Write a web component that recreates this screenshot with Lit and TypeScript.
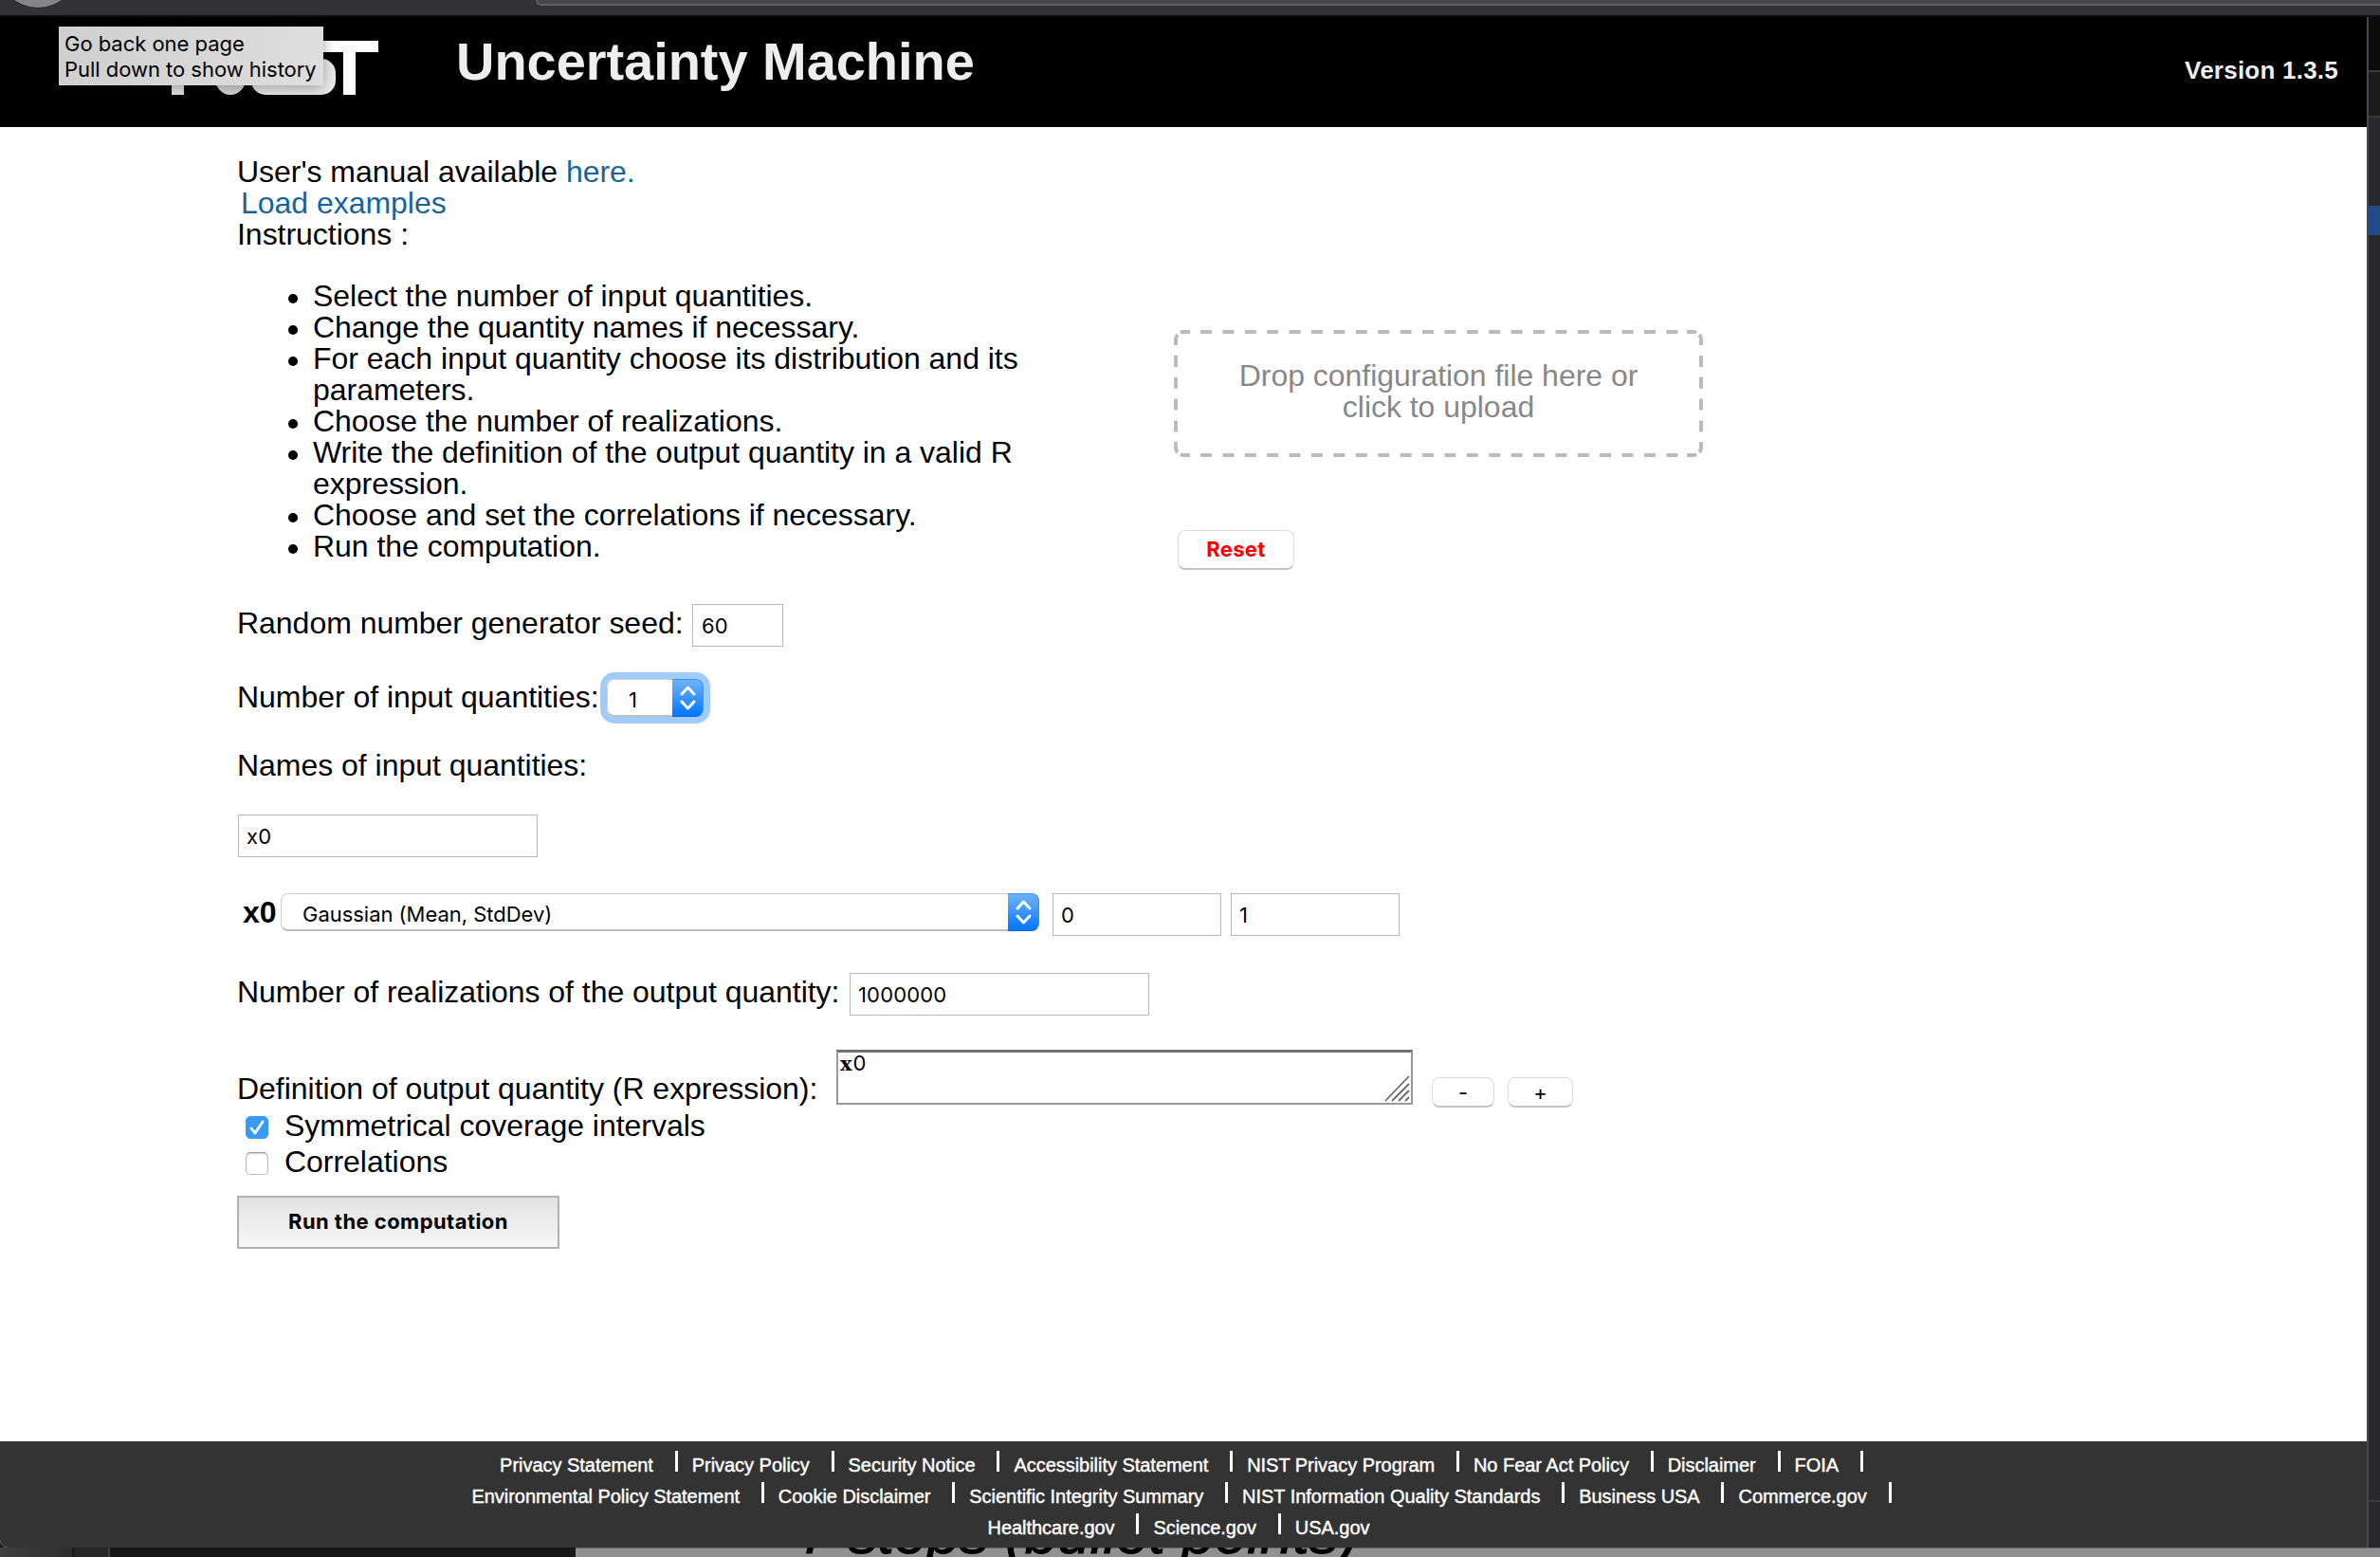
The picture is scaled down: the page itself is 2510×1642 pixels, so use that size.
import { LitElement, html, svg, css } from "lit";
import { customElement } from "lit/decorators.js";

const STEPS = [
  "Select the number of input quantities.",
  "Change the quantity names if necessary.",
  "For each input quantity choose its distribution and its parameters.",
  "Choose the number of realizations.",
  "Write the definition of the output quantity in a valid R expression.",
  "Choose and set the correlations if necessary.",
  "Run the computation.",
];

const FOOTER = [
  ["Privacy Statement", "Privacy Policy", "Security Notice", "Accessibility Statement", "NIST Privacy Program", "No Fear Act Policy", "Disclaimer", "FOIA"],
  ["Environmental Policy Statement", "Cookie Disclaimer", "Scientific Integrity Summary", "NIST Information Quality Standards", "Business USA", "Commerce.gov"],
  ["Healthcare.gov", "Science.gov", "USA.gov"],
];

const range = (n: number) => Array.from({ length: n }, (_, i) => i);

@customElement("mac-select")
class MacSelect extends LitElement {
  static properties = { value: { type: String } };
  declare value: string;
  static styles = css`
    :host { display: flex; box-sizing: border-box; height: 40px; border-radius: 8px; background: #fff;
      font: 22px/26px Inter, "Liberation Sans", sans-serif; color: #000; }
    .face { flex: 1; box-sizing: border-box; border: 1px solid #cfcfcf; border-bottom: 2px solid #bdbdbd;
      border-right: 0; border-radius: 8px 0 0 8px; padding: 8px 0 0 22px; white-space: nowrap; }
    .knob { width: 33px; height: 40px; box-sizing: border-box; border-radius: 0 8px 8px 0;
      border: solid #3d8ff0; border-width: 1px 1px 1px 0; border-bottom-color: #0a63e6;
      background: linear-gradient(#6db3fb, #3f98fd 45%, #0a7bff 90%); }
    svg { display: block; width: 32px; height: 38px; }
  `;
  render() {
    return html`<div class="face">${this.value}</div>
      <div class="knob"><svg viewBox="0 0 32 38" fill="none" stroke="#fff" stroke-width="3" stroke-linecap="round" stroke-linejoin="round">
        <polyline points="10,15 16.5,8 23,15"></polyline><polyline points="10,23 16.5,30 23,23"></polyline></svg></div>`;
  }
}

@customElement("app-root")
class AppRoot extends LitElement {
  static styles = css`
    :host { display: block; width: 2510px; height: 1642px; overflow: hidden; position: relative;
      font: 32px/33px "Liberation Sans", Arial, sans-serif; color: #000; background: #fff; }
    * { box-sizing: border-box; }
    .toolbar { height: 18px; background: #323234; border-bottom: 2px solid #0c0c0e; display: flex;
      justify-content: space-between; overflow: hidden; }
    .toolbar svg { display: block; width: 120px; height: 16px; }
    .url { width: 1945px; height: 6px; background: #464648; border: solid #606163; border-width: 0 0 2px 2px;
      border-bottom-left-radius: 6px; }
    .body { display: flex; height: 1614px; background: #1b1b1c; }
    .page { width: 2496px; display: flex; flex-direction: column; border-bottom-left-radius: 8px; overflow: hidden; background: #fff; }
    .edge { width: 14px; border-left: 2px solid #444850; display: flex; flex-direction: column; background: #29282d; }
    .e1 { height: 58px; background: #0b0b0b; border-bottom: 2px solid #3a3a3b; }
    .e2 { height: 48px; background: #1b1b1c; border-bottom: 2px solid #3a3a3b; }
    .e3 { height: 93px; }
    .e4 { height: 31px; background: #204d89; }
    .e5 { height: 1336px; border-bottom: 2px solid #3d3d3e; }
    header { height: 116px; background: #000; color: #eee; display: flex; flex: none; font-weight: bold; }
    .logo { display: block; width: 481px; height: 116px; }
    h1 { margin: 0; font-size: 56px; line-height: 64px; padding-top: 15px; flex: 1; letter-spacing: -0.05px; }
    .version { font-size: 26px; line-height: 30px; padding: 41px 30px 0 0; letter-spacing: 0.23px; }
    main { flex: 1; padding: 31px 0 0 250px; letter-spacing: -0.03px; }
    a { color: #17649d; text-decoration: none; }
    .load { padding-left: 4px; }
    .cols { display: flex; height: 373px; }
    ul { list-style: none; margin: 32px 0 0; padding: 0; width: 988px; }
    li { display: flex; padding-left: 54px; }
    li::before { content: ""; width: 10px; height: 10px; border-radius: 5px; background: #000; flex: none; margin: 14px 16px 0 0; }
    li span { width: 765px; }
    .drop { display: grid; width: 558px; height: 134px; margin-top: 84px; color: #888; }
    .drop > * { grid-area: 1 / 1; }
    .drop div { padding: 32px 60px; text-align: center; }
    .btn { border: 1px solid #dcdcdc; border-bottom: 2px solid #c4c4c4; border-radius: 8px; text-align: center;
      font: 22px/26px Inter, "Liberation Sans", sans-serif; background: #fff; }
    .reset { width: 123px; height: 42px; margin: 77px 0 0 4px; padding-top: 6px; color: #f00; font-weight: bold; letter-spacing: 0.3px; }
    .row { display: flex; }
    .label { padding-top: 4px; flex: none; white-space: nowrap; }
    .inp { height: 45px; border: 1px solid #b8b8b8; padding: 9px 0 0 8px; font: 22px/26px Inter, "Liberation Sans", sans-serif; letter-spacing: 0.15px; }
    .seed { height: 79px; }
    .seed .label { width: 480px; }
    .seed .inp { width: 96px; padding-left: 9px; }
    .count { height: 75px; }
    .count .label { width: 390px; padding-top: 3px; }
    .count mac-select { width: 102px; box-shadow: 0 0 0 7px #9fccfd; }
    .names { height: 68px; }
    .w316 { width: 316px; }
    .first { margin-left: 1px; }
    .dist { margin-top: 38px; height: 84px; }
    .dist .label { width: 46px; padding-left: 6px; font-weight: bold; }
    .dist mac-select { width: 800px; margin-right: 14px; }
    .dist .inp { width: 178px; margin-right: 10px; }
    .real { height: 81px; }
    .real .label { width: 646px; }
    .def { height: 64px; }
    .def .label { width: 632px; padding-top: 25px; }
    .area { width: 608px; height: 58px; border: 2px solid #999; border-top: 3px solid #707070; display: flex;
      justify-content: space-between; align-items: flex-end; padding: 0 1px 1px 2px; }
    .area .expr { align-self: flex-start; font: 22px/26px Inter, "Liberation Sans", sans-serif; margin-top: -2px; }
    .expr b { font-family: "DejaVu Serif", serif; font-size: 21px; letter-spacing: 1px; }
    .area svg { width: 28px; height: 28px; display: block; }
    .small { height: 32px; margin-top: 29px; line-height: 24px; padding-top: 3px; }
    .minus { width: 66px; margin-left: 20px; }
    .plus { width: 69px; margin-left: 14px; }
    .check { height: 38px; display: flex; padding-left: 9px; gap: 17px; }
    .box { width: 24px; height: 24px; margin-top: 6px; border-radius: 5px; border: 1px solid #bdbdbd; border-top-color: #999;
      box-shadow: inset 0 1px 2px #ccc; }
    .on { background: #3b99fc; border-color: #3b99fc; box-shadow: none; }
    .box svg { display: block; width: 22px; height: 22px; }
    .run { width: 340px; height: 56px; margin-top: 14px; border: 2px solid #b1b1b1; background: linear-gradient(#e2e2e2, #f7f7f7);
      font: bold 22px/26px Inter, "Liberation Sans", sans-serif; padding-top: 12px; text-align: center; letter-spacing: 0.45px; }
    footer { height: 112px; background: #333; color: #fff; flex: none; padding-top: 9px; -webkit-text-stroke: 0.4px #fff;
      font-size: 20px; line-height: 33px; }
    .links { display: flex; justify-content: center; height: 33px; letter-spacing: -0.03px; padding-right: 4px; }
    .links:last-child { padding-right: 10px; }
    .links span { margin-left: 15px; }
    .links span:first-child { margin-left: 0; }
    .bar { width: 3px; height: 22px; background: #fff; margin: 1px 0 0 22.8px; }
    .under { height: 10px; display: flex; background: #171717; overflow: hidden; }
    .dock { width: 76px; background: linear-gradient(90deg, #404040, #2d2d2d); }
    .dock2 { width: 40px; background: #272727; border-left: 3px solid #1c1c1c; border-right: 2px solid #424242; }
    .dark { width: 491px; background: #171717; }
    .note { flex: 1; background: #919191; border-top: 1px solid #666; padding-left: 236px; font: italic 62px/60px "Liberation Sans", sans-serif;
      height: 60px; white-space: nowrap; -webkit-text-stroke: 1px #000; }
    .note span { display: block; margin-top: -46px; }
    .tip { position: absolute; left: 62px; top: 28px; width: 279px; height: 62px; padding: 5px 0 0 6px; background: linear-gradient(100deg, #cfcfcf, #dedede);
      box-shadow: 0 3px 14px rgba(0, 0, 0, 0.35); font: 22px/27px Inter, "Liberation Sans", sans-serif; white-space: nowrap; letter-spacing: -0.03px; }
  `;

  private dashes() {
    return svg`${range(22).map((i) => svg`<path d="M${28 + i * 23.4} 2h12M${28 + i * 23.4} 132h12"></path>`)}
      ${range(4).map((i) => svg`<path d="M2 ${27 + i * 22.8}v12M556 ${27 + i * 22.8}v12"></path>`)}
      <path d="M2 16V10q0-3 2-5M7 3l2-1h8M541 2h8l2 1M554 5q2 2 2 5v6M2 118v6q0 3 2 5M7 131l2 1h8M541 132h8l2-1M554 129q2-2 2-5v-6"></path>`;
  }

  render() {
    return html`
      <div class="toolbar">
        <svg viewBox="0 0 120 16"><circle cx="40" cy="-34" r="42.5" fill="#858585" stroke="#252527" stroke-width="1"></circle></svg>
        <div class="url"></div>
      </div>
      <div class="body">
        <div class="page">
          <header>
            <svg class="logo" viewBox="0 18 481 116" fill="#fff">
              <rect x="181" y="48" width="13" height="52" fill="#e8e8e8"></rect>
              <ellipse cx="243" cy="80" rx="17" ry="20" fill="#dcdcdc"></ellipse>
              <rect x="265" y="62" width="89" height="38" rx="15" fill="#ececec"></rect>
              <rect x="320" y="43" width="79" height="12"></rect>
              <rect x="362" y="43" width="13" height="57"></rect>
            </svg>
            <h1>Uncertainty Machine</h1>
            <div class="version">Version 1.3.5</div>
          </header>
          <main>
            <div>User's manual available <a>here.</a></div>
            <div class="load"><a>Load examples</a></div>
            <div>Instructions :</div>
            <div class="cols">
              <ul>${STEPS.map((s) => html`<li><span>${s}</span></li>`)}</ul>
              <div>
                <div class="drop">
                  <svg width="558" height="134" fill="none" stroke="#bbb" stroke-width="4">${this.dashes()}</svg>
                  <div>Drop configuration file here or click to upload</div>
                </div>
                <div class="btn reset">Reset</div>
              </div>
            </div>
            <div class="row seed"><div class="label">Random number generator seed:</div><div class="inp">60</div></div>
            <div class="row count"><div class="label">Number of input quantities:</div><mac-select .value=${"1"}></mac-select></div>
            <div class="names">Names of input quantities:</div>
            <div class="inp w316 first">x0</div>
            <div class="row dist">
              <div class="label">x0</div><mac-select .value=${"Gaussian (Mean, StdDev)"}></mac-select>
              <div class="inp">0</div><div class="inp">1</div>
            </div>
            <div class="row real"><div class="label">Number of realizations of the output quantity:</div><div class="inp w316">1000000</div></div>
            <div class="row def">
              <div class="label">Definition of output quantity (R expression):</div>
              <div class="area">
                <div class="expr"><b>x</b>0</div>
                <svg viewBox="0 0 28 28" stroke="#6a6a6a" stroke-width="1.8"><path d="M2 27L27 1M9 27L27 9M16 27L27 16M23 27L27 23"></path></svg>
              </div>
              <div class="btn small minus">-</div>
              <div class="btn small plus">+</div>
            </div>
            <div class="check">
              <div class="box on"><svg viewBox="0 0 22 22" fill="none" stroke="#fff" stroke-width="2.8" stroke-linecap="round" stroke-linejoin="round"><path d="M5 12l4 5 8-12"></path></svg></div>
              <div>Symmetrical coverage intervals</div>
            </div>
            <div class="check"><div class="box"></div><div>Correlations</div></div>
            <div class="run">Run the computation</div>
          </main>
          <footer>
            ${FOOTER.map((row, r) => html`<div class="links">
              ${row.map((t, i) => html`<span>${t}</span>${r === 2 && i === row.length - 1 ? "" : html`<div class="bar"></div>`}`)}
            </div>`)}
          </footer>
        </div>
        <div class="edge"><div class="e1"></div><div class="e2"></div><div class="e3"></div><div class="e4"></div><div class="e5"></div></div>
      </div>
      <div class="under"><div class="dock"></div><div class="dock2"></div><div class="dark"></div>
        <div class="note"><span>7 steps (bullet points)</span></div></div>
      <div class="tip">Go back one page<br />Pull down to show history</div>
    `;
  }
}
